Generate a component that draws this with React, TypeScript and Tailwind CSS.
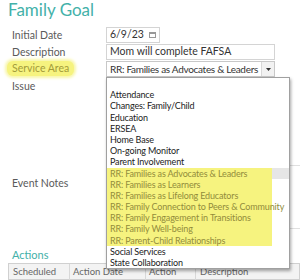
const OPTIONS = [
  "",
  "Attendance",
  "Changes: Family/Child",
  "Education",
  "ERSEA",
  "Home Base",
  "On-going Monitor",
  "Parent Involvement",
  "RR: Families as Advocates & Leaders",
  "RR: Families as Learners",
  "RR: Families as Lifelong Educators",
  "RR: Family Connection to Peers & Community",
  "RR: Family Engagement in Transitions",
  "RR: Family Well-being",
  "RR: Parent-Child Relationships",
  "Social Services",
  "State Collaboration",
];

const SELECTED = "RR: Families as Advocates & Leaders";

function Label({ children }: { children: React.ReactNode }) {
  return <div className="h-[16px] text-[10.5px] leading-[16px] text-[#5a5a5a]">{children}</div>;
}

export default function App() {
  return (
    <div
      className="relative h-[280px] w-[300px] overflow-hidden bg-white"
      style={{ fontFamily: 'Lato, "Noto Sans", sans-serif' }}
    >
      <h1 className="pl-[8px] pt-0 text-[17px] leading-[20px] text-[#43b1a9]">Family Goal</h1>

      <div className="mt-[7px] grid grid-cols-[94px_1fr] gap-y-[1px] pl-[12px]">
        <Label>Initial Date</Label>
        <div className="flex h-[16px] w-[54px] items-center justify-between border border-[#d4d4d4] pl-[3px] pr-[3px] text-[10.5px] text-[#333]">
          <span>6/9/23</span>
          <span className="h-[6px] w-[7px] border border-[#999] border-t-2" />
        </div>

        <Label>Description</Label>
        <div className="flex h-[16px] w-[169px] items-center border border-[#d4d4d4] pl-[3px] text-[10.5px] text-[#333]">
          Mom will complete FAFSA
        </div>

        <div className="-ml-[5px] h-[16px] leading-[16px]">
          <span className="inline-block rounded-[6px] bg-[#f6f37f] px-[5px] align-top text-[10.5px] leading-[15px] text-[#a39b3a] shadow-[0_0_3px_2px_#f8f6a8]">
            Service Area
          </span>
        </div>
        <div className="flex h-[16px] w-[169px] items-center border border-[#c8c8c8] text-[10px] tracking-[-0.3px] text-[#333]">
          <span className="flex-1 whitespace-nowrap pl-[3px]">{SELECTED}</span>
          <span className="flex h-full w-[13px] items-center justify-center border-l border-[#d8d8d8] bg-[#f2f2f2]">
            <svg width="5" height="3" viewBox="0 0 5 3">
              <path d="M0 0h5L2.5 3z" fill="#333" />
            </svg>
          </span>
        </div>

        <Label>Issue</Label>
        <div className="h-[16px] w-[169px] border border-[#d4d4d4]" />
      </div>

      <div className="mt-[81px] grid grid-cols-[94px_1fr] pl-[12px]">
        <Label>Event Notes</Label>
        <div className="-mt-[10px] h-[64px] w-[210px] border border-[#e0e0e0]" />
      </div>

      <div className="mt-[19px] pl-[12px] text-[11px] leading-[14px] text-[#43b1a9]">Actions</div>
      <div className="ml-[8px] mt-[1px] grid h-[17px] grid-cols-[60px_76px_50px_1fr] border border-[#d0d0d0] bg-[#f3f3f3] text-[9.5px] leading-[15px] text-[#666]">
        <span className="pl-[4px]">Scheduled</span>
        <span className="border-l border-[#d8d8d8] pl-[3px]">Action Date</span>
        <span className="border-l border-[#d8d8d8] pl-[3px]">Action Type</span>
        <span className="border-l border-[#d8d8d8] pl-[4px]">Description</span>
      </div>

      {/* open dropdown list */}
      <div className="absolute left-[106px] top-[77px] w-[184px] border border-[#a0a0a0] bg-white shadow-[1px_2px_3px_rgba(0,0,0,0.35)]">
        {OPTIONS.map((opt, i) => {
          const rr = opt.startsWith("RR:");
          const selected = opt === SELECTED;
          return (
            <div
              key={i}
              className={`h-[11.2px] text-[9px] leading-[11.2px] tracking-[-0.15px] ${selected ? "bg-[#e6e6e6]" : ""}`}
            >
              <div
                className={`mr-[17px] h-full whitespace-nowrap pl-[3px] ${
                  rr ? "bg-[#f6f37f] text-[#928c3c]" : "text-[#222]"
                }`}
              >
                {opt}
              </div>
            </div>
          );
        })}
      </div>
    </div>
  );
}
